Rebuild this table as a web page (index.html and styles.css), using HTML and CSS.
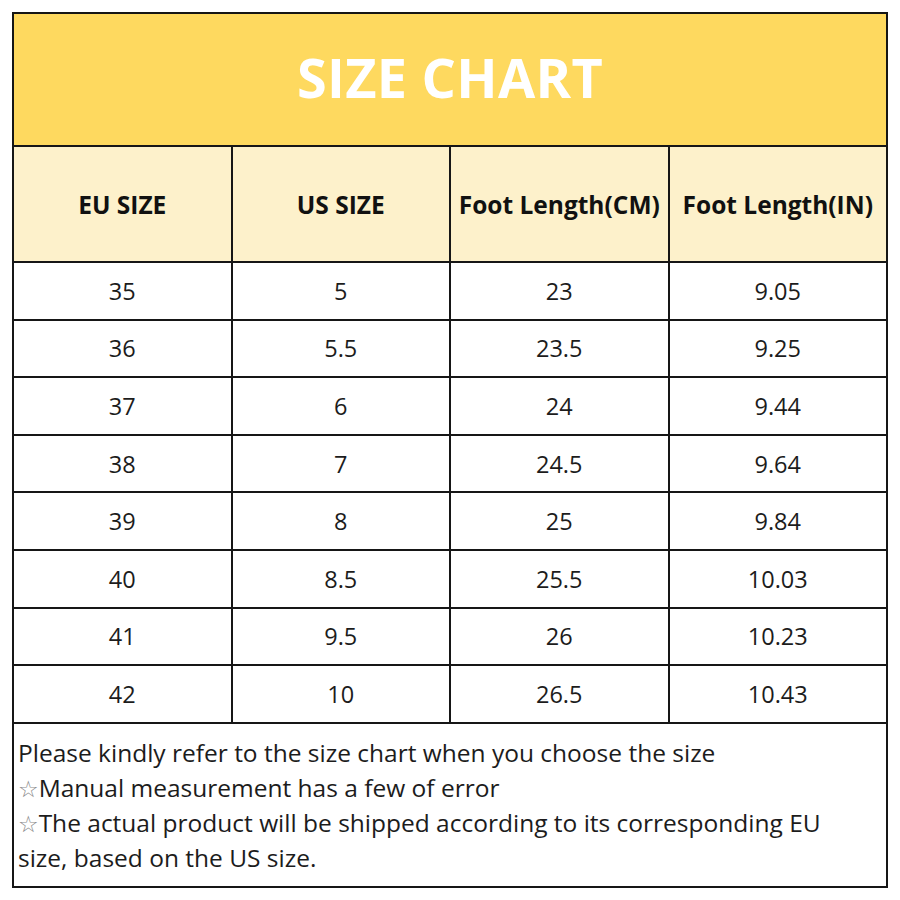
FILE: index.html
```html
<!DOCTYPE html>
<html lang="en">
<head>
<meta charset="utf-8">
<title>Size Chart</title>
<link rel="stylesheet" href="styles.css">
</head>
<body>
<div class="chart">
  <div class="title">SIZE CHART</div>
  <div class="grid">
    <div class="cell head">EU SIZE</div>
    <div class="cell head">US SIZE</div>
    <div class="cell head">Foot Length(CM)</div>
    <div class="cell head">Foot Length(IN)</div>

    <div class="cell">35</div><div class="cell">5</div><div class="cell">23</div><div class="cell">9.05</div>
    <div class="cell">36</div><div class="cell">5.5</div><div class="cell">23.5</div><div class="cell">9.25</div>
    <div class="cell">37</div><div class="cell">6</div><div class="cell">24</div><div class="cell">9.44</div>
    <div class="cell">38</div><div class="cell">7</div><div class="cell">24.5</div><div class="cell">9.64</div>
    <div class="cell">39</div><div class="cell">8</div><div class="cell">25</div><div class="cell">9.84</div>
    <div class="cell">40</div><div class="cell">8.5</div><div class="cell">25.5</div><div class="cell">10.03</div>
    <div class="cell">41</div><div class="cell">9.5</div><div class="cell">26</div><div class="cell">10.23</div>
    <div class="cell">42</div><div class="cell">10</div><div class="cell">26.5</div><div class="cell">10.43</div>
  </div>
  <div class="notes">
    <p>Please kindly refer to the size chart when you choose the size</p>
    <p><span class="star">☆</span>Manual measurement has a few of error</p>
    <p><span class="star">☆</span>The actual product will be shipped according to its corresponding EU size, based on the US size.</p>
  </div>
</div>
</body>
</html>
```
FILE: styles.css
```css
html, body {
  margin: 0;
  padding: 0;
  background: #ffffff;
}

body {
  font-family: "Open Sans", "Noto Sans", "DejaVu Sans", sans-serif;
  color: #1a1a1a;
}

.chart {
  box-sizing: border-box;
  width: 876px;
  height: 876px;
  margin: 12px 0 0 12px;
  border: 2px solid #161616;
  display: flex;
  flex-direction: column;
}

.title {
  box-sizing: border-box;
  height: 133px;
  flex: none;
  padding-bottom: 6px;
  background: #fed95f;
  border-bottom: 2px solid #161616;
  display: flex;
  align-items: center;
  justify-content: center;
  color: #ffffff;
  font-weight: 700;
  font-size: 54px;
  letter-spacing: 0.3px;
}

.grid {
  flex: none;
  display: grid;
  grid-template-columns: repeat(4, 1fr);
  grid-template-rows: 114px repeat(8, 55.6px);
  column-gap: 2px;
  row-gap: 2px;
  background: #161616;
  border-bottom: 2px solid #161616;
}

.cell {
  background: #ffffff;
  display: flex;
  align-items: center;
  justify-content: center;
  font-size: 23.5px;
  color: #1c1c1c;
}

.cell.head {
  background: #fdf1cb;
  font-weight: 700;
  font-size: 24.5px;
  color: #111111;
}

.notes {
  flex: 1;
  padding: 11px 30px 0 4px;
  font-size: 24.5px;
  line-height: 35px;
  color: #1c1c1c;
}

.notes p {
  margin: 0;
}

.star {
  font-family: "DejaVu Sans", sans-serif;
  font-size: 23px;
  line-height: 1;
  color: #8a8a8a;
}
```
